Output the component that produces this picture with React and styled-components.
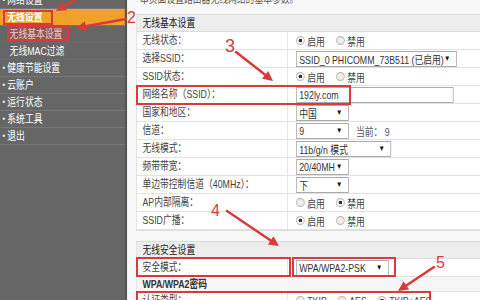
import React from 'react';
import styled, { createGlobalStyle } from 'styled-components';

/* The reference screenshot is horizontally compressed (~0.8x).
   The page is laid out at 600px wide and squeezed with scaleX(0.8). */

const Global = createGlobalStyle`
  html, body { margin: 0; padding: 0; background: #fafafa; }
  body {
    font-family: "Liberation Sans", "Noto Sans CJK SC", sans-serif;
    font-size: 11px;
    color: #333;
  }
`;

const Root = styled.div`
  position: relative;
  width: 480px;
  height: 300px;
  overflow: hidden;
`;

const Page = styled.div`
  display: flex;
  width: 600px;
  height: 308px;
  margin-top: -8px;
  overflow: hidden;
  transform: scaleX(0.8);
  transform-origin: 0 0;
`;

const Sidebar = styled.nav`
  width: 156px;
  flex: none;
  background: #666;
  border-right: 3px solid #555;
`;

const NavItem = styled.div`
  height: 16px;
  line-height: 16px;
  border-bottom: 1px solid ${p => (p.$sub ? '#6b6b6b' : '#777')};
  padding-left: ${p => (p.$sub ? 12 : 3)}px;
  background: ${p => (p.$active ? '#f0a12c' : 'transparent')};
  color: #fff;
  font-size: 11px;
  font-weight: ${p => (p.$active ? 'bold' : 'normal')};
  white-space: nowrap;
  display: flex;
  align-items: center;
  gap: 3px;
`;

const Bullet = styled.span`
  font-size: 9px;
  font-weight: normal;
  color: #eee;
`;

const Main = styled.main`
  flex: 1;
  padding-left: 11px;
  background: #f8f8f8;
`;

const Column = styled.div`
  width: 450px;
`;

const TopText = styled.div`
  height: 14px;
  line-height: 14px;
  padding-left: 5px;
  margin-bottom: 8px;
  color: #555;
  white-space: nowrap;
`;

const Panel = styled.section`
  border: 1px solid #dcdcdc;
  background: #fff;
  margin-bottom: 10px;
`;

const PanelHeader = styled.div`
  height: 16px;
  line-height: 16px;
  padding-left: 7px;
  background: #ededed;
  border-bottom: 1px solid #dcdcdc;
  color: #222;
`;

const SubHeader = styled.div`
  height: 14px;
  line-height: 14px;
  padding-left: 7px;
  background: #f6f6f6;
  border-bottom: 1px solid #e2e2e2;
  font-weight: bold;
  color: #333;
`;

const Row = styled.div`
  display: grid;
  grid-template-columns: 189px 1fr;
  height: 17px;
  border-bottom: 1px solid #e2e2e2;
`;

const Label = styled.div`
  padding-left: 7px;
  line-height: 17px;
  border-right: 1px solid #e2e2e2;
  color: #444;
  white-space: nowrap;
`;

const Value = styled.div`
  padding-left: 10px;
  display: flex;
  align-items: center;
  white-space: nowrap;
  color: #444;
`;

const Select = styled.div`
  box-sizing: border-box;
  width: ${p => p.$w}px;
  height: 16px;
  border: 1px solid #aaa;
  background: #fff;
  display: flex;
  align-items: center;
  justify-content: space-between;
  padding: 0 7px 0 3px;
  color: #333;
`;

const Caret = styled.span`
  font-size: 8px;
  color: #111;
`;

const TextInput = styled.div`
  box-sizing: border-box;
  width: 197px;
  height: 16px;
  border: 1px solid #aaa;
  background: #fff;
  padding-left: 3px;
  line-height: 14px;
  color: #333;
`;

const RadioItem = styled.span`
  display: inline-flex;
  align-items: center;
  gap: 3px;
  margin-right: 14px;
`;

const RadioDot = styled.span`
  box-sizing: border-box;
  width: 11px;
  height: 9px;
  border-radius: 50%;
  border: 1px solid #b8b8b8;
  background: ${p =>
    p.$on
      ? 'radial-gradient(ellipse, #333 0 2px, #f0f0f0 2.6px)'
      : 'radial-gradient(ellipse, #f6f6f6 0, #dcdcdc 100%)'};
`;

const Current = styled.span`
  margin-left: 9px;
  color: #555;
`;

const Overlay = styled.svg`
  position: absolute;
  left: 0;
  top: 0;
  pointer-events: none;
`;

const Radios = ({ items, on }) => (
  <>
    {items.map((t, i) => (
      <RadioItem key={t}>
        <RadioDot $on={i === on} />
        {t}
      </RadioItem>
    ))}
  </>
);

const Sel = ({ w, children }) => (
  <Select $w={w}>
    <span>{children}</span>
    <Caret>▼</Caret>
  </Select>
);

const RED = '#d93b3b';

const Arrow = ({ x1, y1, x2, y2 }) => {
  const a = Math.atan2(y2 - y1, x2 - x1);
  const L = 10, W = 5;
  const bx = x2 - L * Math.cos(a), by = y2 - L * Math.sin(a);
  const px = -Math.sin(a) * W, py = Math.cos(a) * W;
  return (
    <g>
      <line x1={x1} y1={y1} x2={bx} y2={by} stroke={RED} strokeWidth="2.5" strokeLinecap="round" />
      <polygon points={`${x2},${y2} ${bx + px},${by + py} ${bx - px},${by - py}`} fill={RED} />
    </g>
  );
};

const Num = ({ x, y, size = 17, children }) => (
  <text x={x} y={y} fill={RED} fontSize={size} fontFamily="Liberation Sans, sans-serif">{children}</text>
);

export default function App() {
  return (
    <Root>
      <Global />
      <Page>
        <Sidebar>
          <NavItem><Bullet>•</Bullet>网络设置</NavItem>
          <NavItem $active><Bullet>•</Bullet>无线设置</NavItem>
          <NavItem $sub>无线基本设置</NavItem>
          <NavItem $sub>无线MAC过滤</NavItem>
          <NavItem><Bullet>•</Bullet>健康节能设置</NavItem>
          <NavItem><Bullet>•</Bullet>云账户</NavItem>
          <NavItem><Bullet>•</Bullet>运行状态</NavItem>
          <NavItem><Bullet>•</Bullet>系统工具</NavItem>
          <NavItem><Bullet>•</Bullet>退出</NavItem>
        </Sidebar>
        <Main>
          <Column>
            <TopText>本页面设置路由器无线网络的基本参数。</TopText>
            <Panel>
              <PanelHeader>无线基本设置</PanelHeader>
              <Row><Label>无线状态：</Label><Value><Radios items={['启用', '禁用']} on={0} /></Value></Row>
              <Row><Label>选择SSID：</Label><Value><Sel w={201}>SSID_0 PHICOMM_73B511 (已启用)</Sel></Value></Row>
              <Row><Label>SSID状态：</Label><Value><Radios items={['启用', '禁用']} on={0} /></Value></Row>
              <Row><Label>网络名称（SSID）：</Label><Value><TextInput>192ly.com</TextInput></Value></Row>
              <Row><Label>国家和地区：</Label><Value><Sel w={66}>中国</Sel></Value></Row>
              <Row><Label>信道：</Label><Value><Sel w={66}>9</Sel><Current>当前： 9</Current></Value></Row>
              <Row><Label>无线模式：</Label><Value><Sel w={119}>11b/g/n 模式</Sel></Value></Row>
              <Row><Label>频带带宽：</Label><Value><Sel w={66}>20/40MH</Sel></Value></Row>
              <Row><Label>单边带控制信道（40MHz）：</Label><Value><Sel w={66}>下</Sel></Value></Row>
              <Row><Label>AP内部隔离：</Label><Value><Radios items={['启用', '禁用']} on={1} /></Value></Row>
              <Row><Label>SSID广播：</Label><Value><Radios items={['启用', '禁用']} on={0} /></Value></Row>
            </Panel>
            <Panel>
              <PanelHeader>无线安全设置</PanelHeader>
              <Row><Label>安全模式：</Label><Value><Sel w={116}>WPA/WPA2-PSK</Sel></Value></Row>
              <SubHeader>WPA/WPA2密码</SubHeader>
              <Row><Label>认证类型：</Label><Value><Radios items={['TKIP', 'AES', 'TKIP+AES']} on={2} /></Value></Row>
            </Panel>
          </Column>
        </Main>
      </Page>
      <Overlay width="480" height="300" viewBox="0 0 480 300">
        <g fill="none" stroke={RED} strokeWidth="2">
          <rect x="4" y="11" width="48" height="13" />
          <rect x="8" y="26" width="60" height="14" fill="rgba(220,60,60,0.3)" />
          <rect x="137" y="86" width="213" height="18" />
          <rect x="137" y="258" width="153" height="18" />
          <rect x="293" y="258" width="102" height="18" />
          <rect x="137" y="292" width="293" height="20" />
        </g>
        <Arrow x1={80} y1={-3} x2={56} y2={11} />
        <Arrow x1={126} y1={19} x2={76} y2={28} />
        <Arrow x1={236} y1={52} x2={273} y2={81} />
        <Arrow x1={227} y1={211} x2={279} y2={246} />
        <Arrow x1={434} y1={267} x2={398} y2={291} />
        <Num x={127} y={23} size={16}>2</Num>
        <Num x={225} y={52} size={18}>3</Num>
        <Num x={211} y={216} size={16}>4</Num>
        <Num x={436} y={268} size={16}>5</Num>
      </Overlay>
    </Root>
  );
}
